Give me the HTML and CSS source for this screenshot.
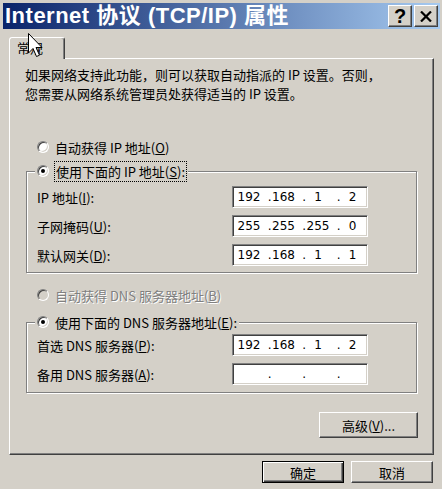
FILE: index.html
```html
<!DOCTYPE html>
<html lang="zh-CN">
<head>
<meta charset="utf-8"/>
<link rel="stylesheet" href="styles.css">
</head>
<body>
<div class="window">
  <div class="titlebar">
    <span class="title">Internet 协议 (TCP/IP) 属性</span>
    <div class="caption-buttons">
      <span class="cap-btn help">?</span>
      <span class="cap-btn close">
        <svg width="12" height="11" viewBox="0 0 12 11">
          <path d="M1 0.5 L11 10.5 M11 0.5 L1 10.5" stroke="#000" stroke-width="2.2" fill="none"/>
        </svg>
      </span>
    </div>
  </div>

  <div class="content">
    <div class="tabs"><div class="tab">常规</div></div>

    <div class="panel">
      <p class="intro"><span>如果网络支持此功能，则可以获取自动指派的 IP 设置。否则，</span><span>您需要从网络系统管理员处获得适当的 IP 设置。</span></p>

      <div class="option first"><span class="radio"></span><span>自动获得 IP 地址(<u>O</u>)</span></div>

      <fieldset class="group ip-group">
        <legend class="option"><span class="radio checked"></span><span class="focus">使用下面的 IP 地址(<u>S</u>):</span></legend>
        <div class="field">
          <label>IP 地址(<u>I</u>):</label>
          <div class="ip"><span>192</span><i>.</i><span>168</span><i>.</i><span>1</span><i>.</i><span>2</span></div>
        </div>
        <div class="field">
          <label>子网掩码(<u>U</u>):</label>
          <div class="ip"><span>255</span><i>.</i><span>255</span><i>.</i><span>255</span><i>.</i><span>0</span></div>
        </div>
        <div class="field">
          <label>默认网关(<u>D</u>):</label>
          <div class="ip"><span>192</span><i>.</i><span>168</span><i>.</i><span>1</span><i>.</i><span>1</span></div>
        </div>
      </fieldset>

      <div class="option disabled"><span class="radio"></span><span>自动获得 DNS 服务器地址(<u>B</u>)</span></div>

      <fieldset class="group dns-group">
        <legend class="option"><span class="radio checked"></span><span>使用下面的 DNS 服务器地址(<u>E</u>):</span></legend>
        <div class="field">
          <label>首选 DNS 服务器(<u>P</u>):</label>
          <div class="ip"><span>192</span><i>.</i><span>168</span><i>.</i><span>1</span><i>.</i><span>2</span></div>
        </div>
        <div class="field">
          <label>备用 DNS 服务器(<u>A</u>):</label>
          <div class="ip"><span></span><i>.</i><span></span><i>.</i><span></span><i>.</i><span></span></div>
        </div>
      </fieldset>

      <div class="panel-actions">
        <button class="btn advanced">高级(<u>V</u>)...</button>
      </div>
    </div>

    <div class="footer">
      <button class="btn default">确定</button>
      <button class="btn">取消</button>
    </div>
  </div>

  <!-- mouse pointer sitting over the tab -->
  <svg class="cursor" width="16" height="25" viewBox="0 0 16 25">
    <path d="M0.5 0.5 L0.5 20 L5 15.5 L8.5 23.5 L11.5 22.2 L8 14.5 L14 14.5 Z" fill="#fff" stroke="#000" stroke-width="1"/>
  </svg>
</div>
</body>
</html>
```

FILE: styles.css
```css
body {
  margin: 0;
  background: #d4d0c8;
  font-family: "Noto Sans CJK SC", sans-serif;
  font-size: 13px;
  color: #000;
}

.window {
  position: relative;
  width: 442px;
  height: 489px;
  box-sizing: border-box;
  padding: 3px 2px 0 3px;
  overflow: hidden;
}

/* title bar */
.titlebar {
  height: 26px;
  display: flex;
  align-items: center;
  padding: 0 2px;
  background: linear-gradient(to right, #0a246a, #a6caf0);
}

.title {
  color: #fff;
  font: bold 22px "Liberation Sans", "Noto Sans CJK SC", sans-serif;
  letter-spacing: 0.5px;
  line-height: 26px;
  white-space: nowrap;
}

.caption-buttons {
  margin-left: auto;
  display: flex;
  gap: 2px;
}

.cap-btn {
  width: 24px;
  height: 22px;
  box-sizing: border-box;
  display: flex;
  align-items: center;
  justify-content: center;
  background: #d4d0c8;
  border: 1px solid;
  border-color: #fff #404040 #404040 #fff;
  box-shadow: inset -1px -1px #808080;
}

.help {
  font: bold 20px "Liberation Sans", sans-serif;
  line-height: 20px;
}

/* tab control */
.content {
  padding: 8px 6px 0 6px;
}

.tabs {
  display: flex;
}

.tab {
  position: relative;
  z-index: 1;
  width: 56px;
  height: 22px;
  box-sizing: border-box;
  margin-bottom: -1px;
  padding-left: 7px;
  border: 1px solid;
  border-bottom: none;
  border-color: #fff #404040 transparent #fff;
  border-radius: 3px 3px 0 0;
  box-shadow: inset -1px 0 #808080;
  background: #d4d0c8;
  line-height: 20px;
}

.panel {
  height: 397px;
  box-sizing: border-box;
  padding-top: 6px;
  border: 1px solid;
  border-color: #fff #404040 #404040 #fff;
  box-shadow: inset -1px -1px #808080;
}

.intro {
  margin: 0;
  padding-left: 15px;
  white-space: nowrap;
}

.intro span {
  display: block;
  line-height: 19px;
}

/* radio options */
.option {
  display: flex;
  align-items: center;
  gap: 6px;
  height: 18px;
  white-space: nowrap;
}

.option.first {
  margin-top: 35px;
  padding-left: 27px;
}

.option.disabled {
  margin-top: 13px;
  padding-left: 27px;
  color: #808080;
  text-shadow: 1px 1px #fff;
}

.radio {
  position: relative;
  flex: none;
  width: 12px;
  height: 12px;
  box-sizing: border-box;
  border-radius: 50%;
  border: 1px solid;
  border-color: #808080 #fff #fff #808080;
  box-shadow: inset 1px 1px #404040, inset -1px -1px #d4d0c8;
  background: #fff;
}

.disabled .radio {
  background: #d4d0c8;
}

.radio.checked::after {
  content: "";
  position: absolute;
  left: 3px;
  top: 3px;
  width: 4px;
  height: 4px;
  border-radius: 50%;
  background: #000;
}

.focus {
  outline: 1px dotted #000;
  outline-offset: 0;
  padding: 0 1px;
}

u {
  text-decoration-thickness: 1px;
}

/* group boxes */
.group {
  width: 391px;
  box-sizing: border-box;
  margin: 6px 0 0 16px;
  padding: 0 0 6px 10px;
  border: 1px solid #808080;
  box-shadow: 1px 1px #fff, inset 1px 1px #fff;
  min-inline-size: 0;
}

.dns-group {
  margin-top: 9px;
  padding-bottom: 7px;
}

.group legend {
  margin-left: -2px;
  padding: 0 2px;
  background: #d4d0c8;
}

.field {
  display: flex;
  align-items: center;
  height: 22px;
  margin-top: 7px;
}

.ip-group .field:first-of-type {
  margin-top: 6px;
}

.dns-group .field:first-of-type {
  margin-top: 3px;
}

.field label {
  width: 195px;
  white-space: nowrap;
}

.ip {
  display: flex;
  align-items: center;
  width: 136px;
  height: 22px;
  box-sizing: border-box;
  padding-left: 4px;
  background: #fff;
  border: 1px solid;
  border-color: #808080 #fff #fff #808080;
  box-shadow: inset 1px 1px #404040, inset -1px -1px #d4d0c8;
  font-family: "DejaVu Sans", sans-serif;
  font-size: 12px;
}

.ip span {
  width: 24px;
  text-align: center;
}

.ip i {
  width: 10.5px;
  text-align: right;
  font-style: normal;
}

/* buttons */
.btn {
  height: 22px;
  box-sizing: border-box;
  padding: 0;
  background: #d4d0c8;
  border: 1px solid;
  border-color: #fff #404040 #404040 #fff;
  box-shadow: inset -1px -1px #808080;
  font-family: inherit;
  font-size: 13px;
  color: #000;
}

.panel-actions {
  display: flex;
  justify-content: flex-end;
  margin-top: 19px;
  padding-right: 15px;
}

.advanced {
  width: 99px;
  height: 26px;
}

.footer {
  display: flex;
  justify-content: flex-end;
  gap: 7px;
  margin-top: 6px;
  padding-right: 1px;
}

.footer .btn {
  width: 82px;
}

.btn.default {
  border-color: #000;
  box-shadow: inset 1px 1px #fff, inset -1px -1px #404040, inset -2px -2px #808080;
}

.cursor {
  position: absolute;
  z-index: 2;
  left: 28px;
  top: 33px;
}
```
